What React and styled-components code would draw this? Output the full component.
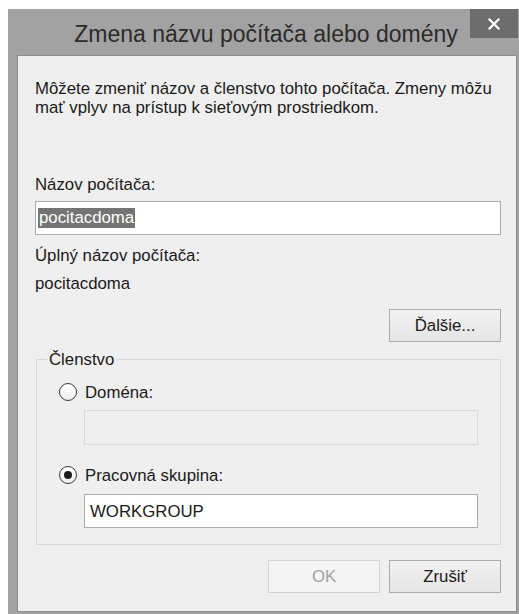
import styled, { createGlobalStyle } from 'styled-components';

const GlobalStyle = createGlobalStyle`
	html, body {
		margin: 0;
		background: #ffffff;
		overflow: hidden;
	}
	body {
		font-family: "Liberation Sans", Arial, sans-serif;
	}
`;

// Window frame
const Page = styled.div`
	padding: 9px 0 0 8px;
`;

const Window = styled.div`
	width: 518px;
	background: #a2a2a2;
	padding: 0 9px 2px 9px;
	box-sizing: border-box;
`;

const TitleBar = styled.div`
	height: 46px;
	display: flex;
	align-items: flex-start;
`;

const Title = styled.div`
	flex: 1;
	text-align: center;
	padding: 12px 0 0 45px;
	font-size: 23px;
	line-height: 26px;
	color: #2b2b2b;
	white-space: nowrap;
`;

const CloseButton = styled.div`
	width: 48px;
	height: 29px;
	margin-right: -1px;
	background: #6d6d6d;
	display: flex;
	align-items: center;
	justify-content: center;
`;

const Client = styled.div`
	background: #efefef;
	border: 1px solid #8c8c8c;
	padding: 23px 15px 18px 17px;
	font-size: 16.8px;
	line-height: 19px;
	color: #1a1a1a;
`;

const Text = styled.p`
	margin: ${(p) => p.$top || 0}px 0 0 0;
`;

const Input = styled.div`
	height: ${(p) => p.$h || 34}px;
	box-sizing: border-box;
	margin-top: ${(p) => p.$top || 0}px;
	border: 1px solid ${(p) => (p.$disabled ? '#d9d9d9' : '#acacac')};
	background: ${(p) => (p.$disabled ? '#efefef' : '#ffffff')};
	display: flex;
	align-items: center;
	padding: 0 ${(p) => p.$pad || 4}px;
	color: #1a1a1a;
`;

const Selected = styled.span`
	background: #747474;
	color: #ffffff;
	padding: 0 1px;
	line-height: 20px;
`;

const ButtonRow = styled.div`
	display: flex;
	justify-content: flex-end;
	gap: 9px;
	margin-top: ${(p) => p.$top || 0}px;
`;

const Button = styled.div`
	width: 112px;
	height: 33px;
	box-sizing: border-box;
	border: 1px solid ${(p) => (p.$disabled ? '#d3d3d3' : '#acacac')};
	background: ${(p) =>
		p.$disabled ? '#f4f4f4' : 'linear-gradient(#f2f2f2, #e5e5e5)'};
	color: ${(p) => (p.$disabled ? '#a3a3a3' : '#1a1a1a')};
	display: flex;
	align-items: center;
	justify-content: center;
`;

const Group = styled.fieldset`
	margin: 8px 0 0 1px;
	padding: 4px 22px 16px 47px;
	border: 1px solid #d8d8d8;
	min-width: 0;
`;

const Legend = styled.legend`
	margin-left: -37px;
	padding: 0 3px 0 2px;
	line-height: 19px;
`;

const RadioRow = styled.label`
	display: flex;
	align-items: center;
	gap: 8px;
	height: 20px;
	margin: ${(p) => p.$top || 0}px 0 0 -25px;
`;

const RadioCircle = styled.span`
	width: 18px;
	height: 18px;
	box-sizing: border-box;
	border-radius: 50%;
	border: 1px solid #3a3a3a;
	background: linear-gradient(#ffffff, #eeeeee);
	display: flex;
	align-items: center;
	justify-content: center;

	&::after {
		content: '';
		display: ${(p) => (p.$checked ? 'block' : 'none')};
		width: 8px;
		height: 8px;
		border-radius: 50%;
		background: #1c1c1c;
	}
`;

function Radio({ checked, top, children }) {
	return (
		<RadioRow $top={top}>
			<RadioCircle $checked={checked} />
			{children}
		</RadioRow>
	);
}

export default function App() {
	return (
		<Page>
			<GlobalStyle />
			<Window>
				<TitleBar>
					<Title>Zmena názvu počítača alebo domény</Title>
					<CloseButton>
						<svg width="12" height="12" viewBox="0 0 12 12">
							<path
								d="M1.5 1.5 L10.5 10.5 M10.5 1.5 L1.5 10.5"
								stroke="#ffffff"
								strokeWidth="2.2"
								strokeLinecap="square"
							/>
						</svg>
					</CloseButton>
				</TitleBar>

				<Client>
					<Text>
						Môžete zmeniť názov a členstvo tohto počítača. Zmeny môžu mať vplyv na
						prístup k sieťovým prostriedkom.
					</Text>

					<Text $top={58}>Názov počítača:</Text>
					<Input $top={7} $pad={2}>
						<Selected>pocitacdoma</Selected>
					</Input>

					<Text $top={11}>Úplný názov počítača:</Text>
					<Text $top={9}>pocitacdoma</Text>

					<ButtonRow $top={16}>
						<Button>Ďalšie...</Button>
					</ButtonRow>

					<Group>
						<Legend>Členstvo</Legend>
						<Radio top={9}>Doména:</Radio>
						<Input $top={8} $h={35} $disabled />
						<Radio checked top={20}>
							Pracovná skupina:
						</Radio>
						<Input $top={9} $pad={5}>
							WORKGROUP
						</Input>
					</Group>

					<ButtonRow $top={15}>
						<Button $disabled>OK</Button>
						<Button>Zrušiť</Button>
					</ButtonRow>
				</Client>
			</Window>
		</Page>
	);
}
